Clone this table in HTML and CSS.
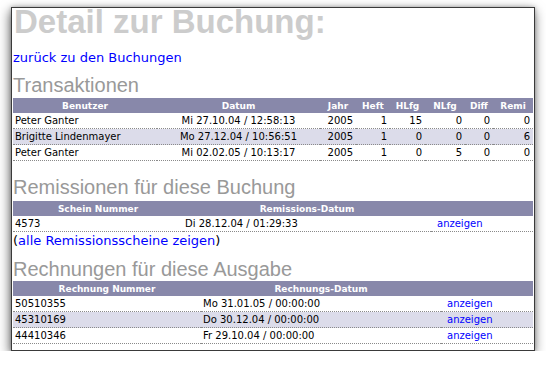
FILE: index.html
```html
<!DOCTYPE html>
<html>
<head>
<meta charset="utf-8">
<link rel="stylesheet" href="styles.css">
</head>
<body>
<div class="window">
  <h1 class="title">Detail zur Buchung:</h1>
  <p class="back"><a href="#">zurück zu den Buchungen</a></p>

  <h2 class="section s-trans">Transaktionen</h2>
  <table class="grid t-trans">
    <colgroup>
      <col class="c144"><col class="c163"><col class="c36"><col class="c34"><col class="c35"><col class="c40"><col class="c28"><col class="c40">
    </colgroup>
    <tr><th>Benutzer</th><th>Datum</th><th>Jahr</th><th>Heft</th><th>HLfg</th><th>NLfg</th><th>Diff</th><th>Remi</th></tr>
    <tr><td>Peter Ganter</td><td class="ctr">Mi 27.10.04 / 12:58:13</td><td class="num">2005</td><td class="num">1</td><td class="num">15</td><td class="num">0</td><td class="num">0</td><td class="num">0</td></tr>
    <tr class="alt"><td>Brigitte Lindenmayer</td><td class="ctr">Mo 27.12.04 / 10:56:51</td><td class="num">2005</td><td class="num">1</td><td class="num">0</td><td class="num">0</td><td class="num">0</td><td class="num">6</td></tr>
    <tr><td>Peter Ganter</td><td class="ctr">Mi 02.02.05 / 10:13:17</td><td class="num">2005</td><td class="num">1</td><td class="num">0</td><td class="num">5</td><td class="num">0</td><td class="num">0</td></tr>
  </table>

  <h2 class="section s-remi">Remissionen für diese Buchung</h2>
  <table class="grid t-remi">
    <colgroup><col class="c170"><col class="c248"><col class="c102"></colgroup>
    <tr><th>Schein Nummer</th><th>Remissions-Datum</th><th></th></tr>
    <tr><td>4573</td><td>Di 28.12.04 / 01:29:33</td><td class="act"><a href="#">anzeigen</a></td></tr>
  </table>
  <p class="all">(<a href="#">alle Remissionsscheine zeigen</a>)</p>

  <h2 class="section s-rech">Rechnungen für diese Ausgabe</h2>
  <table class="grid t-rech">
    <colgroup><col class="c188"><col class="c240"><col class="c92"></colgroup>
    <tr><th>Rechnung Nummer</th><th>Rechnungs-Datum</th><th></th></tr>
    <tr><td>50510355</td><td>Mo 31.01.05 / 00:00:00</td><td class="act"><a href="#">anzeigen</a></td></tr>
    <tr class="alt"><td>45310169</td><td>Do 30.12.04 / 00:00:00</td><td class="act"><a href="#">anzeigen</a></td></tr>
    <tr><td>44410346</td><td>Fr 29.10.04 / 00:00:00</td><td class="act"><a href="#">anzeigen</a></td></tr>
  </table>
</div>
</body>
</html>
```
FILE: styles.css
```css
html, body {
  margin: 0;
  padding: 0;
  background: #ffffff;
}
body {
  font-family: "DejaVu Sans", Verdana, sans-serif;
  color: #000;
}
.window {
  margin: 7px 0 0 11px;
  width: 521px;
  height: 342px;
  border: 1px solid #3a3a3a;
  background: #fff;
  box-shadow: -1px 4px 11px rgba(0,0,0,0.6), 0 0 4px rgba(0,0,0,0.25);
  padding: 0 0 0 1px;
  box-sizing: content-box;
}
a { color: #0000ff; text-decoration: none; }

.title {
  margin: 0;
  font-family: "Liberation Sans", Arial, sans-serif;
  font-size: 33px;
  line-height: 27px;
  font-weight: bold;
  color: #cccccc;
  padding-left: 1px;
}
.back {
  margin: 14px 0 0 0;
  font-size: 13px;
  line-height: 17px;
}
.section {
  margin: 0;
  font-family: "Liberation Sans", Arial, sans-serif;
  font-size: 20px;
  font-weight: normal;
  line-height: 22px;
  color: #999999;
}
.s-trans { margin-top: 8px; }
.s-remi { margin-top: 15px; }
.s-rech { margin-top: 9px; }

.grid {
  border-collapse: collapse;
  table-layout: fixed;
  width: 520px;
  font-size: 10px;
}
.t-trans { margin-top: 2px; }
.t-remi { margin-top: 3px; }
.t-rech { margin-top: 1px; }

.c144 { width: 144px; } .c163 { width: 163px; } .c36 { width: 36px; }
.c34 { width: 34px; } .c35 { width: 35px; } .c40 { width: 40px; }
.c28 { width: 28px; } .c170 { width: 170px; } .c248 { width: 248px; }
.c102 { width: 102px; } .c188 { width: 188px; } .c240 { width: 240px; }
.c92 { width: 92px; }

.grid th {
  background: #8888aa;
  color: #ffffff;
  font-weight: bold;
  font-size: 9px;
  height: 15px;
  padding: 0;
  text-align: center;
  white-space: nowrap;
}
.grid td {
  height: 15px;
  padding: 0 0 0 2px;
  border-bottom: 1px dotted #8a8a8a;
  white-space: nowrap;
  text-align: left;
}
.grid tr.alt td { background: #dcdcea; }
.grid td.ctr { text-align: center; padding: 0; }
.grid td.num { text-align: right; padding: 0 3px 0 0; }
.grid td.act { padding-left: 6px; }
.grid td.act a { font-size: 10px; }

.all {
  margin: 0;
  font-size: 13px;
  line-height: 17px;
}
```
